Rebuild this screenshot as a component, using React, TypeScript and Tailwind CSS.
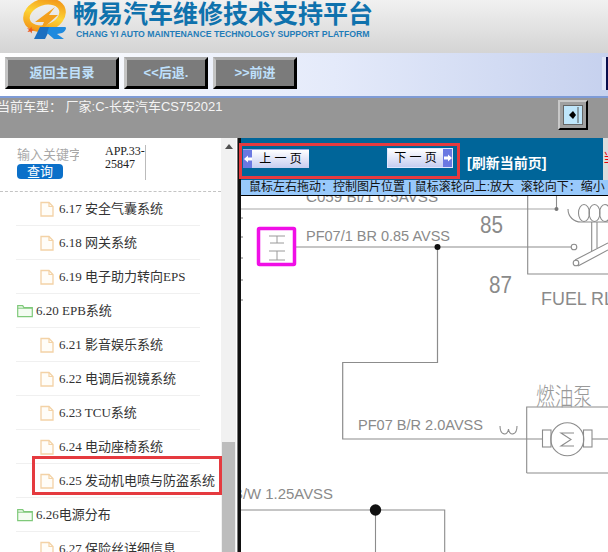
import React from "react";

const items = [
  { label: "6.17 安全气囊系统", folder: false },
  { label: "6.18 网关系统", folder: false },
  { label: "6.19 电子助力转向EPS", folder: false },
  { label: "6.20 EPB系统", folder: true },
  { label: "6.21 影音娱乐系统", folder: false },
  { label: "6.22 电调后视镜系统", folder: false },
  { label: "6.23 TCU系统", folder: false },
  { label: "6.24 电动座椅系统", folder: false },
  { label: "6.25 发动机电喷与防盗系统", folder: false },
  { label: "6.26电源分布", folder: true },
  { label: "6.27 保险丝详细信息", folder: false },
];

function FileIcon() {
  return (
    <svg width="14" height="16" viewBox="0 0 14 16" className="shrink-0">
      <path d="M1 1.500h8l4 4v9.500h-12z" fill="#fffdf8" stroke="#f3d2a6" strokeWidth="1.300" />
      <path d="M9 1.500v4h4" fill="none" stroke="#f3d2a6" strokeWidth="1.200" />
    </svg>
  );
}

function FolderIcon() {
  return (
    <svg width="16" height="14" viewBox="0 0 16 14" className="shrink-0">
      <path d="M.7 12.600v-11h5l1.200 2h8.400v9z" fill="#f4fcf2" stroke="#7fc97a" strokeWidth="1.200" />
      <path d="M.7 4.200h14.600" stroke="#7fc97a" strokeWidth="1" />
    </svg>
  );
}

function Logo() {
  return (
    <svg width="46" height="41" viewBox="0 0 46 41" className="shrink-0">
      <defs>
        <linearGradient id="ring" x1="0" y1="1" x2="1" y2="0">
          <stop offset="0" stopColor="#f08a12" />
          <stop offset="0.5" stopColor="#fdd435" />
          <stop offset="1" stopColor="#f08c14" />
        </linearGradient>
      </defs>
      <ellipse
        cx="23.500"
        cy="15"
        rx="18.500"
        ry="13"
        transform="rotate(-18 23.500 15)"
        fill="none"
        stroke="url(#ring)"
        strokeWidth="6.500"
      />
      <path d="M34 7L14 22H23L19 31L37 15H28Z" fill="#f4a01c" />
      <path d="M6 28l3 .8 1.400-2 .5 2.500 2.500.8-2.400 1-.4 2.500-1.400-2-2.800.3 1.600-2z" fill="#ee5a1e" />
      <path d="M19 27H30L24 39H13Z" fill="#1c6fc0" />
      <path d="M28 27H44C46 27 45 31 41 33L36 34L43 39H33L26 33Z" fill="#1f8ade" />
    </svg>
  );
}

function ToolButton({ label, width }: { label: string; width: string }) {
  return (
    <div
      className={`${width} h-[32px] flex items-center justify-center bg-[#7b7b7b] border-[3px] border-t-[#a9a9a9] border-l-[#c4c4c4] border-r-black border-b-black text-[13px] font-bold text-[#bfe0fb]`}
    >
      {label}
    </div>
  );
}

function PageArrow({ dir }: { dir: "left" | "right" }) {
  return (
    <div className="w-[9px] h-full bg-[#6a78e2] flex items-center justify-center shrink-0">
      <svg width="8" height="8" viewBox="0 0 8 8">
        {dir === "left" ? (
          <path d="M0 4L4 .5V2.500H8V5.500H4V7.500Z" fill="#fff" />
        ) : (
          <path d="M8 4L4 .5V2.500H0V5.500H4V7.500Z" fill="#fff" />
        )}
      </svg>
    </div>
  );
}

function Drawing() {
  return (
    <svg viewBox="241 196 367 356" className="w-full h-full block" fontFamily="'Liberation Sans', sans-serif">
      <g fill="none" stroke="#8c8c8c" strokeWidth="1.100">
        <path d="M241 209H557" stroke="#a8a8a8" />
        <path d="M296 247H571" />
        <path d="M437.500 247V362.500H342.700V439H542" strokeWidth="1.200" />
        <path d="M527.700 196V274H608" />
        <path d="M556.500 196V209" />
        <path d="M568 209c0 8 6 13 13 13h28" />
        <ellipse cx="584" cy="213" rx="5.500" ry="8.500" />
        <ellipse cx="594.500" cy="213" rx="5.500" ry="8.500" />
        <ellipse cx="605" cy="213" rx="5.500" ry="8.500" />
        <path d="M591.700 222V251M597 222V248" />
        <circle cx="574" cy="247" r="2.800" />
        <path d="M575 260L608 243M578 266L608 250" />
        <circle cx="576" cy="263" r="2.800" />
        <path d="M526.700 473V407H608M526.700 473H608" />
        <rect x="542.500" y="430" width="8.500" height="17" />
        <rect x="583.500" y="430" width="8.500" height="17" />
        <circle cx="567.300" cy="439.300" r="16.500" />
        <path d="M574 433H561L571 439.500L561 446H574" />
        <path d="M592 439H608" />
        <path d="M500 426c0 10 8 10 8.500 3c.5 7 8.500 7 8.500-3" />
        <path d="M241 510H444.700V552M375.500 510V552" />
        <path d="M241 218h2M241 237h2M241 258h2M241 280h2M241 300h2" stroke="#777" />
      </g>
      <circle cx="437.500" cy="247" r="3" fill="#111" />
      <circle cx="556.500" cy="209" r="2" fill="#777" />
      <circle cx="375.500" cy="510" r="5.700" fill="#111" />
      <rect x="258.500" y="228.500" width="36" height="36" fill="none" stroke="#f00fe6" strokeWidth="3.500" rx="1" />
      <path
        d="M269 236H285M277 236V243M270 243H284M269 251H285M277 251V260M269 260H285"
        fill="none"
        stroke="#9a9a9a"
        strokeWidth="1"
      />
      <g fill="#8a8a8a">
        <text x="306" y="202" fontSize="14" textLength="132" lengthAdjust="spacingAndGlyphs">C059 Bt/1 0.5AVSS</text>
        <text x="306" y="241" fontSize="15" textLength="144" lengthAdjust="spacingAndGlyphs">PF07/1 BR 0.85 AVSS</text>
        <text x="480" y="233" fontSize="23" textLength="23" lengthAdjust="spacingAndGlyphs">85</text>
        <text x="489" y="293" fontSize="23" textLength="23" lengthAdjust="spacingAndGlyphs">87</text>
        <text x="541" y="305" fontSize="18" textLength="73" lengthAdjust="spacingAndGlyphs">FUEL RL</text>
        <text x="358" y="430" fontSize="15" textLength="125" lengthAdjust="spacingAndGlyphs">PF07 B/R 2.0AVSS</text>
        <text
          x="536"
          y="405"
          fontSize="24"
          textLength="56"
          lengthAdjust="spacingAndGlyphs"
          fontFamily="'Noto Sans CJK SC', sans-serif"
          fontWeight="300"
          fill="#999"
        >
          燃油泵
        </text>
        <text x="233" y="499" fontSize="14" textLength="100" lengthAdjust="spacingAndGlyphs">B/W 1.25AVSS</text>
      </g>
    </svg>
  );
}

export default function App() {
  return (
    <div
      className="relative w-[608px] h-[552px] overflow-hidden flex flex-col bg-white"
      style={{ fontFamily: "'Liberation Sans', 'Noto Sans CJK SC', sans-serif" }}
    >
      {/* header */}
      <div className="h-[53px] shrink-0 flex items-start pl-[21px] bg-gradient-to-b from-[#f1f1f1] to-[#d4d4d4]">
        <Logo />
        <div className="ml-[6px] flex flex-col">
          <div className="text-[25px] leading-[28px] font-bold text-[#0f72ad] whitespace-nowrap">
            畅易汽车维修技术支持平台
          </div>
          <div className="ml-[3px] mt-[1px] text-[8.700px] leading-[11px] font-bold text-[#1f7cb8] whitespace-nowrap">
            CHANG YI AUTO MAINTENANCE TECHNOLOGY SUPPORT PLATFORM
          </div>
        </div>
      </div>

      {/* toolbar */}
      <div className="h-[45px] shrink-0 flex gap-[5px] pl-[5px] pt-[4px] border-b-[2px] border-[#7e9bd6] bg-gradient-to-r from-white via-[#e4eafa] via-55% to-[#c6d1ee]">
        <ToolButton label="返回主目录" width="w-[114px]" />
        <ToolButton label="<<后退." width="w-[84px]" />
        <ToolButton label=">>前进" width="w-[84px]" />
        <div className="ml-auto w-[6px] h-[33px] border-l-[4px] border-l-[#dfe6f8] border-r-[2px] border-r-[#0a0f4d]" />
      </div>

      {/* car model bar */}
      <div className="h-[40px] shrink-0 flex justify-between bg-[#969696] pr-[20px]">
        <div className="-ml-[3px] pt-[1px] text-[13px] leading-[16px] text-[#f4f4f4] whitespace-nowrap">
          当前车型： 厂家:C-长安汽车CS752021
        </div>
        <div className="mt-[2px] w-[30px] h-[30px] p-[3px] bg-[#a0a0a0] border-[2px] border-t-[#c8c8c8] border-l-[#c8c8c8] border-r-black border-b-black">
          <div className="w-full h-full bg-[#bfe6fb] border border-[#666] flex items-center justify-center">
            <svg width="16" height="16" viewBox="0 0 16 16">
              <path d="M4 8L8 4L11 8L8 12Z" fill="#000" />
              <path d="M13 0V16" stroke="#555" strokeWidth="1" />
            </svg>
          </div>
        </div>
      </div>

      <div className="flex-1 flex min-h-0">
        {/* sidebar */}
        <div className="relative w-[237px] shrink-0 flex overflow-hidden bg-white">
          <div className="w-[221px] shrink-0 flex flex-col">
            <div className="h-[54px] shrink-0 flex pl-[17px] pt-[7px] border-b border-dashed border-[#c4c4c4]">
              <div className="w-[62px] shrink-0">
                <div className="h-[20px] overflow-hidden text-[13px] leading-[20px] text-[#a8a8a8] whitespace-nowrap">
                  输入关键字
                </div>
                <div className="-mt-[1px] w-[46px] h-[15px] rounded-[4px] bg-[#0b70c9] text-white text-[13px] leading-[15px] text-center">
                  查询
                </div>
              </div>
              <div
                className="ml-[26px] w-[41px] h-[35px] overflow-hidden border-r border-[#bbb] text-[12px] leading-[13px] text-[#222] whitespace-nowrap"
                style={{ fontFamily: "'Liberation Serif', 'Noto Sans CJK SC', serif" }}
              >
                APP.33-
                <br />
                25847
              </div>
            </div>
            <div className="w-[184px] ml-[16px]">
              {items.map((item) => (
                <div
                  key={item.label}
                  className={`h-[34px] shrink-0 flex items-center border-b border-[#f0f0f0] text-[13px] text-[#333] whitespace-nowrap ${
                    item.folder ? "gap-[3px] pl-[1px]" : "gap-[5px] pl-[24px]"
                  }`}
                  style={{ fontFamily: "'Liberation Serif', 'Noto Sans CJK SC', serif" }}
                >
                  {item.folder ? <FolderIcon /> : <FileIcon />}
                  <span>{item.label}</span>
                </div>
              ))}
            </div>
          </div>
          {/* scrollbar */}
          <div className="w-[15px] shrink-0 bg-[#f1f1f1] flex flex-col items-center justify-between pt-[6px]">
            <div className="w-0 h-0 border-x-[4px] border-x-transparent border-b-[5px] border-b-[#505050]" />
            <div className="w-[13px] h-[110px] bg-[#bdbdbd]" />
          </div>
        </div>
        <div className="w-[4px] shrink-0 bg-[#111] border-l border-[#777]" />

        {/* main panel */}
        <div className="flex-1 min-w-0 flex flex-col">
          <div className="h-[42px] shrink-0 flex bg-[#006599]">
            <div className="mt-[11px] ml-[2px] w-[66px] h-[19px] flex items-stretch bg-gradient-to-b from-white to-[#c6cdf0] border-t border-[#9aa8e6] text-[12px] leading-[18px] text-black">
              <PageArrow dir="left" />
              <span className="flex-1 text-center whitespace-pre">上 一 页</span>
            </div>
            <div className="mt-[10px] ml-[78px] w-[66px] h-[20px] flex items-stretch bg-gradient-to-b from-white to-[#c6cdf0] border border-[#dfe6ff] text-[12px] leading-[18px] text-black">
              <span className="flex-1 text-center whitespace-pre">下 一 页</span>
              <PageArrow dir="right" />
            </div>
            <div className="ml-[14px] mt-[17px] text-[14px] leading-[16px] font-bold text-white whitespace-nowrap">
              [刷新当前页]
            </div>
            <div className="ml-auto w-[5px] h-full bg-[#dcdcdc] overflow-hidden text-[13px] leading-[40px] text-red-600">
              当
            </div>
          </div>
          <div className="h-[16px] shrink-0 bg-[#98c9fb] border-b border-black pl-[8px] text-[12px] leading-[15px] text-[#111] whitespace-pre overflow-hidden">
            鼠标左右拖动：控制图片位置 | 鼠标滚轮向上:放大  滚轮向下：缩小
          </div>
          <div className="flex-1 min-h-0 bg-white">
            <Drawing />
          </div>
        </div>
      </div>

      {/* annotation boxes */}
      <div className="absolute left-[239px] top-[143px] w-[221px] h-[36px] border-[3px] border-[#e53a3f]" />
      <div className="absolute left-[32px] top-[456px] w-[190px] h-[39px] border-[3px] border-[#e53a3f]" />
    </div>
  );
}
